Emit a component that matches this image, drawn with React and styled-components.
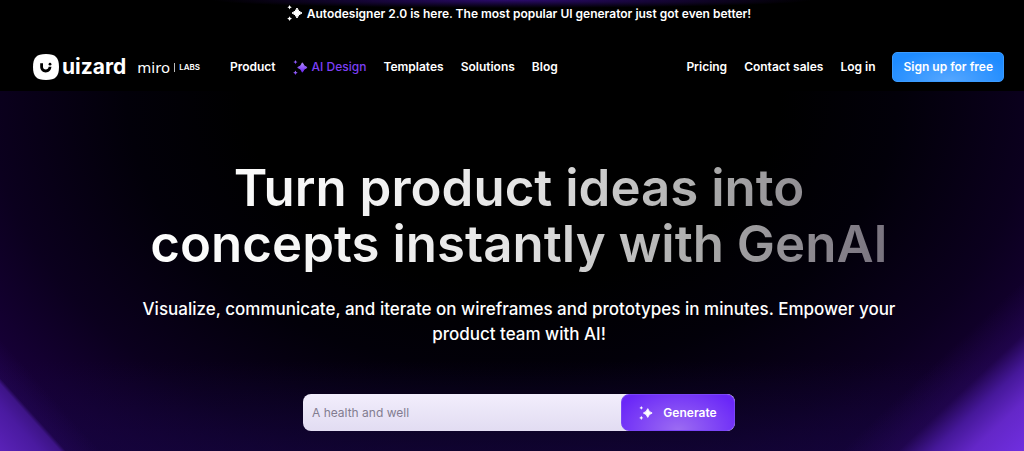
import React from "react";
import styled, { createGlobalStyle } from "styled-components";

const GlobalStyle = createGlobalStyle`
  *, *::before, *::after { box-sizing: border-box; }
  body {
    margin: 0;
    background: #000;
    color: #fff;
    font-family: Inter, "Liberation Sans", sans-serif;
  }
`;

const Page = styled.div`
  display: flex;
  flex-direction: column;
  min-height: 100vh;
`;

const Banner = styled.a`
  display: flex;
  align-items: center;
  justify-content: center;
  gap: 4px;
  height: 28px;
  padding: 0 0 2px 14px;
  background: radial-gradient(ellipse 300px 8px at 50% 0, #2b0b6b, #000);
  color: #fff;
  font-size: 12px;
  font-weight: 600;
  text-decoration: none;
`;

const Header = styled.header`
  display: flex;
  align-items: center;
  justify-content: space-between;
  height: 63px;
  padding: 15px 20px 0 33px;
  background: #000;
`;

const Group = styled.div`
  display: flex;
  align-items: center;
`;

const Brand = styled.a`
  display: flex;
  align-items: center;
  color: #fff;
  text-decoration: none;
`;

const Wordmark = styled.span`
  margin-left: 3px;
  font-size: 21px;
  font-weight: 700;
  line-height: 28px;
`;

const Miro = styled.span`
  margin: 0 4px 0 11px;
  font-family: "Noto Sans", sans-serif;
  font-size: 15px;
  line-height: 28px;
`;

const Labs = styled.span`
  padding-left: 4px;
  border-left: 1px solid #bbb;
  font-size: 8px;
  font-weight: 600;
  line-height: 9px;
`;

const Nav = styled.nav`
  display: flex;
  align-items: center;
  gap: 17px;
  margin-left: ${(p) => (p.$inset ? "30px" : "0")};
`;

const NavLink = styled.a`
  display: inline-flex;
  align-items: center;
  gap: 4px;
  color: ${(p) => (p.$accent ? "#7c3ff5" : "#fff")};
  font-size: 12px;
  font-weight: ${(p) => (p.$accent ? 500 : 600)};
  line-height: 20px;
  white-space: nowrap;
  text-decoration: none;
`;

const SignUp = styled.button`
  height: 30px;
  margin-left: 17px;
  padding: 0 10px;
  border: 1px solid #3a9bff;
  border-radius: 5px;
  background: radial-gradient(ellipse 60% 110% at 50% 100%, #56a7ff, #1e8bff);
  color: #fff;
  font: 600 12px/20px Inter, sans-serif;
  white-space: nowrap;
`;

const Hero = styled.main`
  display: flex;
  flex: 1;
  flex-direction: column;
  align-items: center;
  padding: 69px 14px 20px 28px;
  background:
    linear-gradient(48deg, #5a22b8 0, #4a1aa0 30px, #3d1487 45px, rgba(40, 8, 96, 0.4) 49px, transparent 75px),
    linear-gradient(317deg, #702ee0 0, #6427c8 36px, #46189a 62px, rgba(42, 8, 98, 0.5) 86px, transparent 125px),
    linear-gradient(0deg, rgba(20, 6, 62, 0.6), transparent 90px),
    radial-gradient(ellipse 58% 430px at 50% 0, #000 45%, #020009 65%, #0b001e 88%, #18003a 108%, #22004f 125%);
  text-align: center;
`;

const Title = styled.h1`
  margin: 0;
  background: linear-gradient(100deg, #fff 0%, #f2f2f2 30%, #e4e4e4 50%, #a9a9a9 75%, #77717d 100%);
  background-clip: text;
  -webkit-background-clip: text;
  color: transparent;
  font-size: 51px;
  font-weight: 600;
  line-height: 56px;
`;

const Lead = styled.p`
  max-width: 780px;
  margin: 25px 0 0;
  font-size: 17px;
  font-weight: 500;
  line-height: 25px;
`;

const Prompt = styled.form`
  display: flex;
  width: 432px;
  max-width: 100%;
  height: 37px;
  margin-top: 47px;
  border-radius: 8px;
  background: linear-gradient(#f2eefc, #e2dcf2);
`;

const PromptInput = styled.input`
  flex: 1;
  min-width: 0;
  padding: 0 9px;
  border: 0;
  background: none;
  color: #222;
  font: 400 12px/20px Inter, sans-serif;
  &::placeholder { color: #827c90; opacity: 1; }
`;

const Generate = styled.button`
  display: flex;
  align-items: center;
  justify-content: center;
  gap: 10px;
  width: 114px;
  border: 1px solid #7a45f7;
  border-radius: 8px;
  background: radial-gradient(ellipse 60% 130% at 50% 100%, #9c6cf2, #6a27f8);
  color: #fff;
  font: 600 12px/20px Inter, sans-serif;
`;

function Sparkles({ size = 15, from = "#fff", to = "#fff", id }) {
  return (
    <svg width={size} height={size} viewBox="0 0 16 16" aria-hidden="true">
      <linearGradient id={id} x1="0" y1="0" x2="0" y2="1">
        <stop offset="0" stopColor={from} />
        <stop offset="1" stopColor={to} />
      </linearGradient>
      <g fill={`url(#${id})`}>
        <path d="M10 3Q11.2 6.8 15 8Q11.2 9.2 10 13Q8.8 9.2 5 8Q8.8 6.8 10 3Z" stroke={`url(#${id})`} strokeWidth="1" strokeLinejoin="round" />
        <path d="M2.6 0L3.3 1.5L4.8 2.2L3.3 2.9L2.6 4.4L1.9 2.9L.4 2.2L1.9 1.5Z" />
        <path d="M2.6 11.2L3.4 12.8L5 13.6L3.4 14.4L2.6 16L1.8 14.4L.2 13.6L1.8 12.8Z" />
      </g>
    </svg>
  );
}

function Mark() {
  return (
    <svg width="26" height="26" viewBox="0 0 26 26" aria-hidden="true">
      <path d="M13 0C22.5 0 26 3.5 26 13S22.5 26 13 26S0 22.5 0 13S3.5 0 13 0Z" fill="#fff" />
      <path d="M7.2 9.2H10V12.8C10 14.6 11.1 15.5 12.7 15.5C14.4 15.5 15.5 14.5 15.6 12.8H18.4C18.2 16.3 16.1 18.4 12.7 18.4C9.6 18.4 7.2 16.3 7.2 12.8Z" fill="#000" />
      <circle cx="17" cy="10.2" r="1.4" fill="#000" />
    </svg>
  );
}

export default function App() {
  return (
    <>
      <GlobalStyle />
      <Page>
        <Banner href="#autodesigner">
          <Sparkles id="spark-banner" size={16} />
          Autodesigner 2.0 is here. The most popular UI generator just got even better!
        </Banner>
        <Header>
          <Group>
            <Brand href="#home">
              <Mark />
              <Wordmark>uizard</Wordmark>
              <Miro>miro</Miro>
              <Labs>LABS</Labs>
            </Brand>
            <Nav $inset aria-label="Main">
              <NavLink href="#product">Product</NavLink>
              <NavLink href="#ai" $accent>
                <Sparkles id="spark-nav" from="#b18cff" to="#6b25f5" />
                AI Design
              </NavLink>
              <NavLink href="#templates">Templates</NavLink>
              <NavLink href="#solutions">Solutions</NavLink>
              <NavLink href="#blog">Blog</NavLink>
            </Nav>
          </Group>
          <Group>
            <Nav aria-label="Account">
              <NavLink href="#pricing">Pricing</NavLink>
              <NavLink href="#sales">Contact sales</NavLink>
              <NavLink href="#login">Log in</NavLink>
            </Nav>
            <SignUp type="button">Sign up for free</SignUp>
          </Group>
        </Header>
        <Hero>
          <Title>
            Turn product ideas into
            <br />
            concepts instantly with GenAI
          </Title>
          <Lead>
            Visualize, communicate, and iterate on wireframes and prototypes in minutes. Empower your
            product team with AI!
          </Lead>
          <Prompt onSubmit={(e) => e.preventDefault()}>
            <PromptInput aria-label="Describe your project" placeholder="A health and well" />
            <Generate type="submit">
              <Sparkles id="spark-generate" size={14} />
              Generate
            </Generate>
          </Prompt>
        </Hero>
      </Page>
    </>
  );
}
